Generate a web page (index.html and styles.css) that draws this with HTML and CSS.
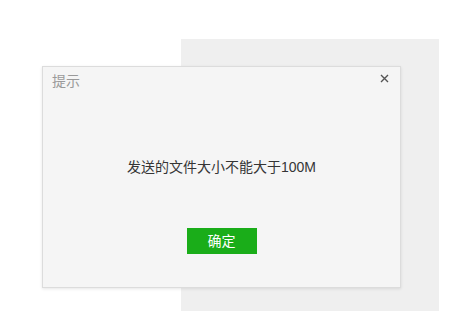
FILE: index.html
```html
<!DOCTYPE html>
<html>
<head>
<meta charset="utf-8">
<link rel="stylesheet" href="styles.css">
</head>
<body>
<div class="stage">
  <div class="panel"></div>
  <div class="dialog">
    <div class="head">
      <span class="title">提示</span>
      <span class="close">
        <svg width="9" height="9" viewBox="0 0 9 9"><path d="M1 1L8 8M8 1L1 8" stroke="#555" stroke-width="1.4" fill="none"/></svg>
      </span>
    </div>
    <div class="msg">发送的文件大小不能大于100M</div>
    <div class="foot">
      <button class="ok">确定</button>
    </div>
  </div>
</div>
</body>
</html>
```
FILE: styles.css
```css
html, body {
  margin: 0;
  padding: 0;
  background: #ffffff;
  font-family: "Liberation Sans", "Noto Sans CJK SC", sans-serif;
}
.stage {
  position: relative;
  width: 465px;
  height: 322px;
  padding-top: 39px;
  box-sizing: border-box;
}
.panel {
  margin-left: 181px;
  width: 258px;
  height: 272px;
  background: #efefef;
}
.dialog {
  position: absolute;
  left: 42px;
  top: 66px;
  width: 359px;
  height: 222px;
  box-sizing: border-box;
  background: #f5f5f5;
  border: 1px solid #dcdcdc;
  box-shadow: 0 1px 3px rgba(0,0,0,0.10);
  display: flex;
  flex-direction: column;
}
.head {
  display: flex;
  justify-content: space-between;
  align-items: flex-start;
  padding: 4px 11px 0 9px;
  height: 24px;
}
.title {
  font-size: 14px;
  line-height: 20px;
  color: #9a9a9a;
}
.close {
  display: flex;
  padding-top: 3px;
}
.msg {
  margin-top: 62px;
  text-align: center;
  font-size: 14px;
  line-height: 20px;
  color: #353535;
}
.foot {
  margin-top: 51px;
  display: flex;
  justify-content: center;
}
.ok {
  width: 70px;
  height: 26px;
  border: none;
  margin: 0;
  padding: 0;
  background: #1aad19;
  color: #ffffff;
  font-family: "Liberation Sans", "Noto Sans CJK SC", sans-serif;
  font-size: 14px;
  line-height: 26px;
}
```
